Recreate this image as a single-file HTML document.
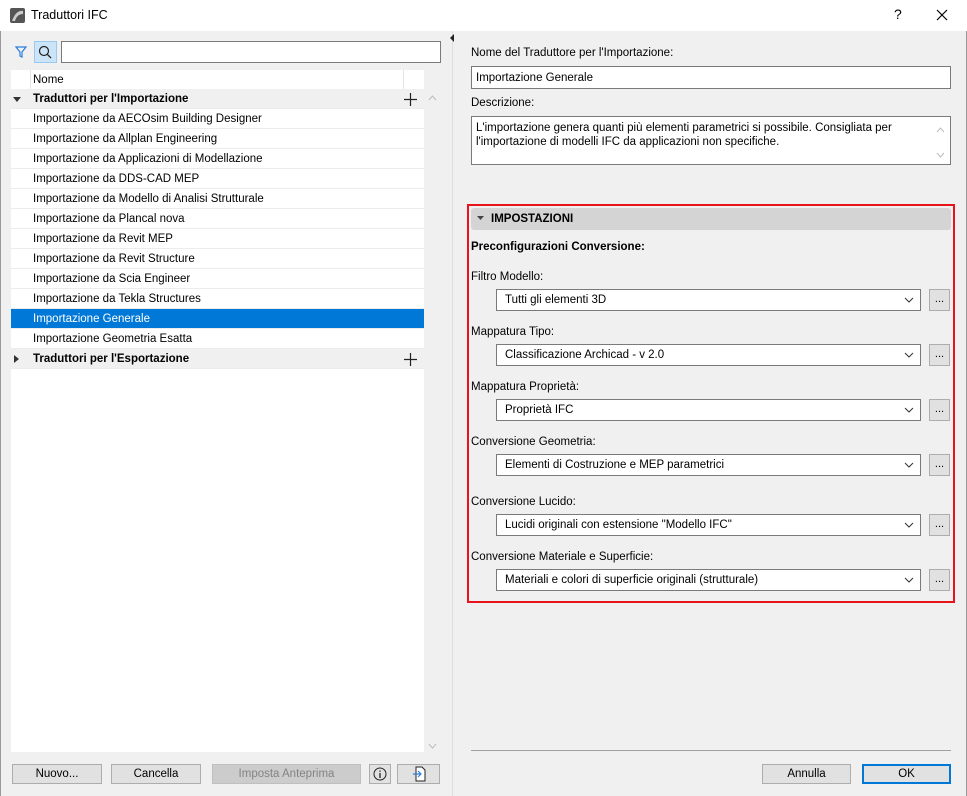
<!DOCTYPE html>
<html><head><meta charset="utf-8"><style>
*{box-sizing:border-box;margin:0;padding:0}
body{width:967px;height:796px;overflow:hidden;background:#f0f0f0;font-family:"Liberation Sans",sans-serif;font-size:11.5px;color:#000;position:relative}
.a{position:absolute}
.row{position:absolute;left:11px;width:413px;height:20px;line-height:21px;padding-left:22px;background:#fff;border-bottom:1px solid #ececec;white-space:nowrap}
.grp{background:#f0f0f0;font-weight:bold;padding-left:22px}
.sel{background:#0078d7;color:#fff}
.lbl{position:absolute;left:471px}
.dd{position:absolute;left:496px;width:425px;height:22px;background:#fff;border:1px solid #7a7a7a;line-height:21px;padding-left:8px}
.dd svg{position:absolute;right:6px;top:7px}
.dots{position:absolute;left:929px;width:21px;height:22px;border:1px solid #adadad;background:#e1e1e1;text-align:center;line-height:18px;font-size:11px}
.btn{position:absolute;top:764px;height:20px;border:1px solid #adadad;background:#e1e1e1;text-align:center;line-height:19px}
</style></head><body>
<div class="a" style="left:0;top:0;width:967px;height:31px;background:#fff"></div>
<svg class="a" style="left:10px;top:8px" width="15" height="15"><rect width="15" height="15" rx="2" fill="#555"/><path d="M2 13 Q6 2 13 3 L13 6 Q7 6 5 13Z" fill="#ccc"/></svg>
<div class="a" style="left:31px;top:8px;font-size:12.5px">Traduttori IFC</div>
<div class="a" style="left:894px;top:6px;font-size:14px">?</div>
<svg class="a" style="left:936px;top:9px" width="12" height="12"><path d="M1 1L11 11M11 1L1 11" stroke="#000" stroke-width="1.2"/></svg>
<div class="a" style="left:0;top:31px;width:1px;height:765px;background:#999"></div>
<div class="a" style="left:966px;top:31px;width:1px;height:765px;background:#999"></div>
<svg class="a" style="left:15px;top:46px" width="12" height="12"><path d="M1 1H11L7 6V11L5 10V6Z" fill="none" stroke="#2b7fd8" stroke-width="1.2"/></svg>
<div class="a" style="left:34px;top:41px;width:23px;height:22px;background:#cce4f7;border:1px solid #99c9ef"></div>
<svg class="a" style="left:37px;top:44px" width="16" height="16"><circle cx="7" cy="7" r="4.5" fill="none" stroke="#222" stroke-width="1.2"/><path d="M10.3 10.3L14 14" stroke="#222" stroke-width="1.3"/></svg>
<div class="a" style="left:61px;top:41px;width:380px;height:22px;background:#fff;border:1px solid #7a7a7a"></div>
<div class="a" style="left:11px;top:70px;width:413px;height:682px;background:#fff"></div>
<div class="a" style="left:30px;top:70px;width:1px;height:19px;background:#e5e5e5"></div>
<div class="a" style="left:403px;top:70px;width:1px;height:19px;background:#e5e5e5"></div>
<div class="a" style="left:33px;top:74px">Nome</div>
<div class="row grp" style="top:89px">Traduttori per l'Importazione</div>
<svg class="a" style="left:13px;top:97px" width="8" height="6"><path d="M0 0H8L4 5Z" fill="#333"/></svg>
<svg class="a" style="left:404px;top:93px" width="13" height="13"><path d="M6.5 0V13M0 6.5H13" stroke="#222" stroke-width="1.2"/></svg>
<div class="row" style="top:109px">Importazione da AECOsim Building Designer</div>
<div class="row" style="top:129px">Importazione da Allplan Engineering</div>
<div class="row" style="top:149px">Importazione da Applicazioni di Modellazione</div>
<div class="row" style="top:169px">Importazione da DDS-CAD MEP</div>
<div class="row" style="top:189px">Importazione da Modello di Analisi Strutturale</div>
<div class="row" style="top:209px">Importazione da Plancal nova</div>
<div class="row" style="top:229px">Importazione da Revit MEP</div>
<div class="row" style="top:249px">Importazione da Revit Structure</div>
<div class="row" style="top:269px">Importazione da Scia Engineer</div>
<div class="row" style="top:289px">Importazione da Tekla Structures</div>
<div class="row sel" style="top:309px">Importazione Generale</div>
<div class="row" style="top:329px">Importazione Geometria Esatta</div>
<div class="row grp" style="top:349px">Traduttori per l'Esportazione</div>
<svg class="a" style="left:14px;top:355px" width="6" height="8"><path d="M0 0V8L5 4Z" fill="#333"/></svg>
<svg class="a" style="left:404px;top:353px" width="13" height="13"><path d="M6.5 0V13M0 6.5H13" stroke="#222" stroke-width="1.2"/></svg>
<svg class="a" style="left:428px;top:95px" width="9" height="6"><path d="M1 5L4.5 1L8 5" fill="none" stroke="#bbb"/></svg>
<svg class="a" style="left:428px;top:743px" width="9" height="6"><path d="M1 1L4.5 5L8 1" fill="none" stroke="#bbb"/></svg>
<div class="a" style="left:452px;top:31px;width:1px;height:765px;background:#ddd"></div>
<svg class="a" style="left:450px;top:34px" width="5" height="8"><path d="M4 0V8L0 4Z" fill="#222"/></svg>
<div class="btn" style="left:12px;width:90px">Nuovo...</div>
<div class="btn" style="left:111px;width:90px">Cancella</div>
<div class="btn" style="left:212px;width:149px;background:#ccc;border-color:#bfbfbf;color:#838383">Imposta Anteprima</div>
<div class="btn" style="left:369px;width:22px"><svg width="14" height="14" style="margin-top:2px"><circle cx="7" cy="7" r="6" fill="none" stroke="#222"/><path d="M7 6V11M7 3.5V4.7" stroke="#222" stroke-width="1.3"/></svg></div>
<div class="btn" style="left:397px;width:43px"><svg width="14" height="16" style="margin-top:1px"><path d="M4 1H10L13 4V15H4Z" fill="#fff" stroke="#222"/><path d="M1 8H9M6 5L9 8L6 11" fill="none" stroke="#2b7fd8" stroke-width="1.2"/></svg></div>
<div class="lbl" style="top:47px">Nome del Traduttore per l'Importazione:</div>
<div class="a" style="left:471px;top:66px;width:480px;height:23px;background:#fff;border:1px solid #7a7a7a;padding:5px 4px;">Importazione Generale</div>
<div class="lbl" style="top:97px">Descrizione:</div>
<div class="a" style="left:471px;top:116px;width:480px;height:49px;background:#fff;border:1px solid #7a7a7a;padding:4px 4px;line-height:14px">L'importazione genera quanti più elementi parametrici si possibile. Consigliata per<br>l'importazione di modelli IFC da applicazioni non specifiche.</div>
<svg class="a" style="left:936px;top:127px" width="9" height="6"><path d="M1 5L4.5 1L8 5" fill="none" stroke="#bbb"/></svg>
<svg class="a" style="left:936px;top:152px" width="9" height="6"><path d="M1 1L4.5 5L8 1" fill="none" stroke="#bbb"/></svg>
<div class="a" style="left:467px;top:204px;width:488px;height:399px;border:2px solid #e8141b"></div>
<div class="a" style="left:471px;top:208px;width:480px;height:22px;background:#d4d4d4;border-radius:3px"></div>
<svg class="a" style="left:477px;top:216px" width="7" height="5"><path d="M0 0H7L3.5 4Z" fill="#444"/></svg>
<div class="a" style="left:491px;top:213px;font-weight:bold">IMPOSTAZIONI</div>
<div class="lbl" style="top:241px;font-weight:bold">Preconfigurazioni Conversione:</div>
<div class="lbl" style="top:271px">Filtro Modello:</div>
<div class="dd" style="top:289px">Tutti gli elementi 3D<svg width="10" height="6"><path d="M1 1L5 5L9 1" fill="none" stroke="#333"/></svg></div><div class="dots" style="top:289px">...</div>
<div class="lbl" style="top:326px">Mappatura Tipo:</div>
<div class="dd" style="top:344px">Classificazione Archicad - v 2.0<svg width="10" height="6"><path d="M1 1L5 5L9 1" fill="none" stroke="#333"/></svg></div><div class="dots" style="top:344px">...</div>
<div class="lbl" style="top:381px">Mappatura Proprietà:</div>
<div class="dd" style="top:399px">Proprietà IFC<svg width="10" height="6"><path d="M1 1L5 5L9 1" fill="none" stroke="#333"/></svg></div><div class="dots" style="top:399px">...</div>
<div class="lbl" style="top:436px">Conversione Geometria:</div>
<div class="dd" style="top:454px">Elementi di Costruzione e MEP parametrici<svg width="10" height="6"><path d="M1 1L5 5L9 1" fill="none" stroke="#333"/></svg></div><div class="dots" style="top:454px">...</div>
<div class="lbl" style="top:496px">Conversione Lucido:</div>
<div class="dd" style="top:514px">Lucidi originali con estensione "Modello IFC"<svg width="10" height="6"><path d="M1 1L5 5L9 1" fill="none" stroke="#333"/></svg></div><div class="dots" style="top:514px">...</div>
<div class="lbl" style="top:551px">Conversione Materiale e Superficie:</div>
<div class="dd" style="top:569px">Materiali e colori di superficie originali (strutturale)<svg width="10" height="6"><path d="M1 1L5 5L9 1" fill="none" stroke="#333"/></svg></div><div class="dots" style="top:569px">...</div>
<div class="a" style="left:471px;top:750px;width:480px;height:1px;background:#a0a0a0"></div>
<div class="btn" style="left:762px;width:89px">Annulla</div>
<div class="btn" style="left:862px;width:89px;border:2px solid #0078d7;line-height:17px">OK</div>
</body></html>
